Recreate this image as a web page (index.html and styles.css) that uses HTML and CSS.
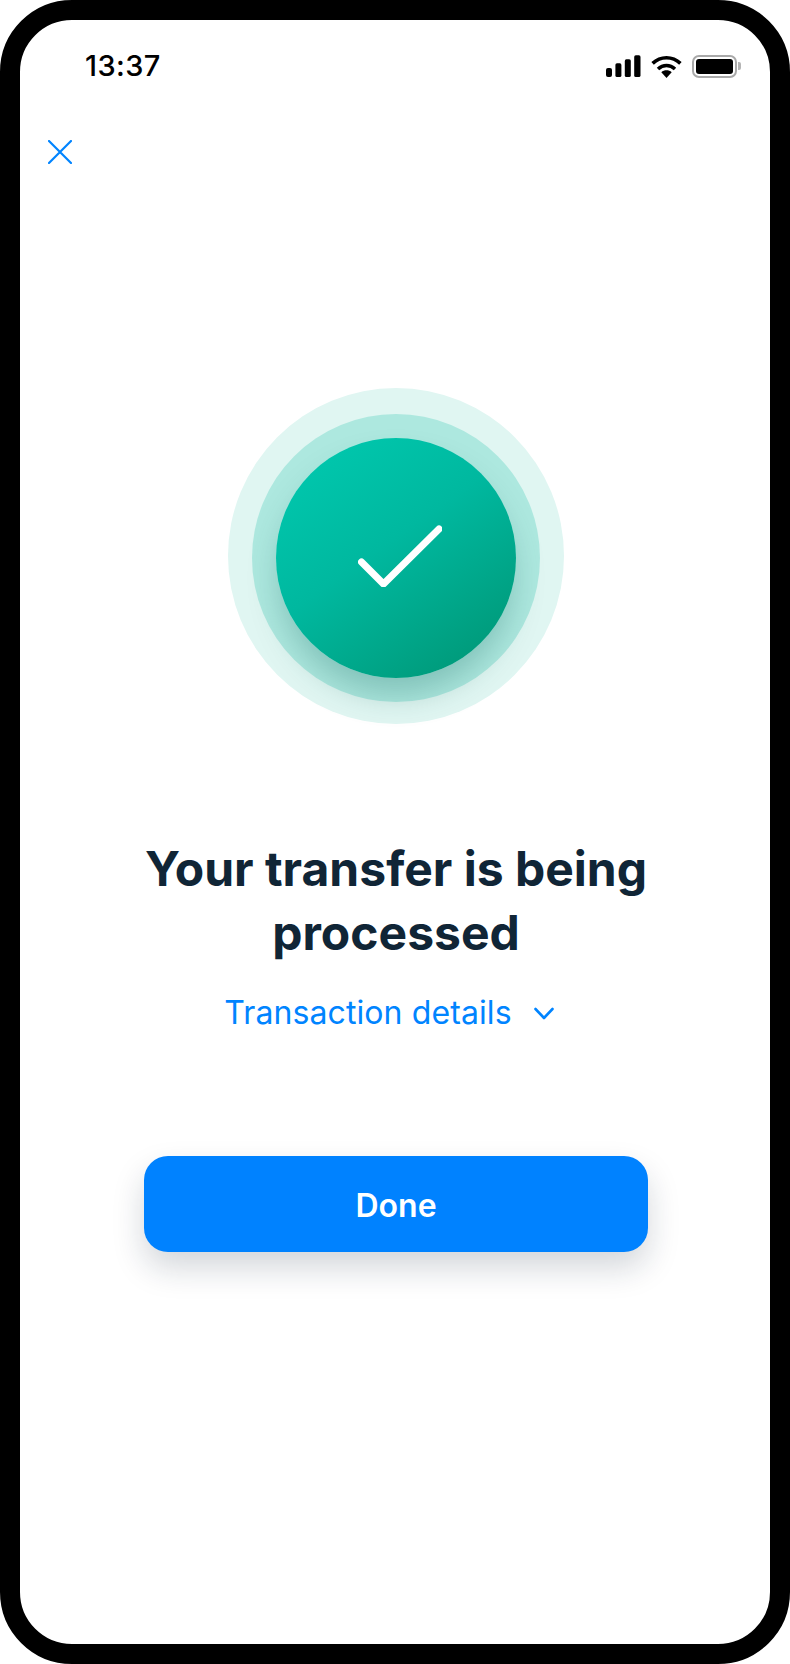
FILE: index.html
```html
<!DOCTYPE html>
<html lang="en">
<head>
<meta charset="utf-8">
<title>Transfer processing</title>
<link rel="stylesheet" href="styles.css">
</head>
<body>
<div class="device">
  <div class="screen">
    <header class="status-bar">
      <span class="time">13:37</span>
      <div class="status-icons">
        <svg class="signal" width="35" height="22" viewBox="0 0 35 22"><rect x="0" y="13" width="6" height="9" rx="2"/><rect x="9.4" y="8.3" width="6" height="13.7" rx="1.6"/><rect x="18.8" y="4.3" width="6" height="17.7" rx="1.6"/><rect x="28.2" y="0.3" width="6.3" height="21.7" rx="1.6"/></svg>
        <svg class="wifi" width="31" height="23" viewBox="0 0 31 23"><path d="M1.6 8.4C9.6 0.8 21.4 0.8 29.4 8.4" fill="none" stroke="#000" stroke-width="3.6"/><path d="M7 14C12 9.4 19 9.4 24 14" fill="none" stroke="#000" stroke-width="3.6"/><path d="M10.3 17.3C13.2 14.7 17.8 14.7 20.7 17.3L15.5 23Z"/></svg>
        <div class="battery">
          <div class="battery-case"><div class="battery-level"></div></div>
          <div class="battery-nub"></div>
        </div>
      </div>
    </header>
    <button class="close" aria-label="Close">
      <svg width="24" height="24" viewBox="0 0 24 24"><path d="M1 1L23 23M23 1L1 23" fill="none" stroke="#0084ff" stroke-width="2.2" stroke-linecap="round"/></svg>
    </button>
    <main class="content">
      <div class="ring-outer">
        <div class="ring-middle">
          <div class="ring-inner">
            <svg class="check" width="84" height="62" viewBox="0 0 84 62"><path d="M3.5 37L25.5 59L81 4" fill="none" stroke="#fff" stroke-width="7" stroke-linecap="round" stroke-linejoin="round"/></svg>
          </div>
        </div>
      </div>
      <h1 class="title">Your transfer is being<br>processed</h1>
      <a class="details">
        <span>Transaction details</span>
        <svg width="20" height="14" viewBox="0 0 20 14"><path d="M1.5 2L10 11L18.5 2" fill="none" stroke="#0084ff" stroke-width="2.6" stroke-linecap="round" stroke-linejoin="round"/></svg>
      </a>
      <button class="done">Done</button>
    </main>
  </div>
</div>
</body>
</html>
```
FILE: styles.css
```css
* { box-sizing: border-box; }
html, body { margin: 0; padding: 0; background: #fff; }
body { font-family: Inter, "Liberation Sans", sans-serif; }

.device {
  width: 790px;
  height: 1664px;
  border: 20px solid #000;
  border-radius: 72px;
  overflow: hidden;
  background: #fff;
}
.screen { display: flex; flex-direction: column; height: 100%; }

.status-bar {
  display: flex;
  justify-content: space-between;
  align-items: center;
  height: 52px;
  margin-top: 20px;
  padding: 0 29px 0 65px;
}
.time {
  font-size: 29px;
  font-weight: 500;
  line-height: 34px;
  letter-spacing: 0.4px;
  color: #000;
}
.status-icons { display: flex; align-items: center; gap: 10px; }
.signal { display: block; }
.wifi { display: block; }
.battery { display: flex; align-items: center; gap: 1px; }
.battery-case {
  width: 45px;
  height: 23px;
  border: 2px solid #a9a9a9;
  border-radius: 7px;
  padding: 2px;
}
.battery-level { width: 100%; height: 100%; background: #000; border-radius: 3px; }
.battery-nub { width: 3px; height: 8px; background: #b5b5b5; border-radius: 0 2px 2px 0; }

.close {
  align-self: flex-start;
  display: block;
  margin: 48px 0 0 28px;
  padding: 0;
  width: 24px;
  height: 24px;
  border: 0;
  background: none;
}
.close svg { display: block; }

.content {
  display: flex;
  flex-direction: column;
  align-items: center;
  margin-top: 224px;
  padding-left: 2px;
}
.ring-outer {
  display: flex;
  align-items: center;
  justify-content: center;
  width: 336px;
  height: 336px;
  padding-top: 3px;
  border-radius: 50%;
  background: #e0f6f2;
}
.ring-middle {
  display: flex;
  align-items: center;
  justify-content: center;
  width: 288px;
  height: 288px;
  border-radius: 50%;
  background: #ade8df;
}
.ring-inner {
  display: flex;
  align-items: center;
  justify-content: center;
  width: 240px;
  height: 240px;
  border-radius: 50%;
  background: linear-gradient(145deg, #00c7ad 10%, #00b89f 45%, #009675 95%);
  box-shadow: 0 20px 32px -4px rgba(0, 80, 75, 0.26);
}
.check { display: block; margin: 0 0 4px 7px; }

.title {
  margin: 113px 0 0;
  font-size: 48px;
  font-weight: 700;
  line-height: 64px;
  text-align: center;
  color: #102536;
}
.details {
  display: flex;
  align-items: center;
  gap: 22px;
  margin-top: 26px;
  margin-right: 14px;
  font-size: 32px;
  line-height: 44px;
  letter-spacing: 0.1px;
  color: #0084ff;
}
.details svg { display: block; margin-top: 2px; }
.done {
  display: block;
  width: 504px;
  height: 96px;
  margin-top: 121px;
  padding: 2px 0 0;
  border: 0;
  border-radius: 24px;
  background: #0082ff;
  color: #fff;
  font-family: inherit;
  font-size: 32px;
  font-weight: 600;
  box-shadow: 0 16px 32px rgba(16, 35, 53, 0.18);
}
```
